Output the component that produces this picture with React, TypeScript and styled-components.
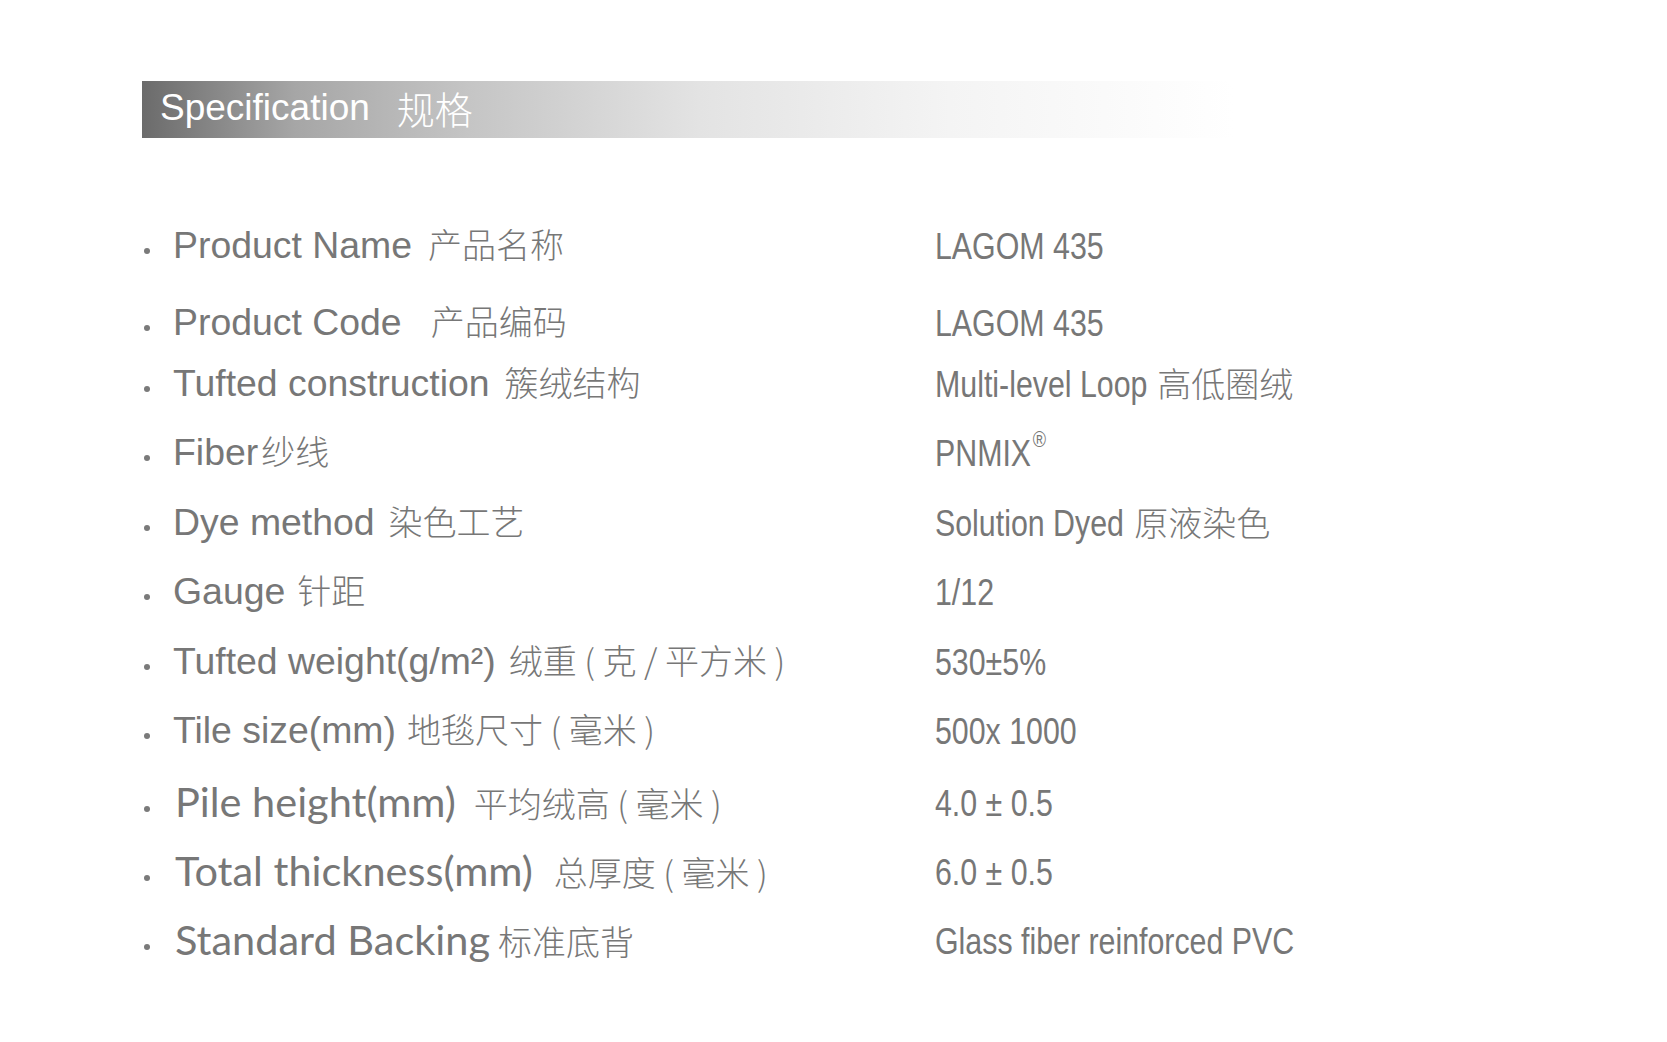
import React from 'react';
import styled, { createGlobalStyle } from 'styled-components';

// no Arial Narrow in the sandbox: the value column squeezes Liberation Sans instead
const NARROW = 0.82;

const GlobalStyle = createGlobalStyle`
  html,
  body {
    margin: 0;
    padding: 0;
    background: #fff;
  }

  body {
    font-family: 'Liberation Sans', Arial, sans-serif;
  }
`;

const Page = styled.div`
  width: 1667px;
  height: 1042px;
  box-sizing: border-box;
  padding: 81px 0 0 142px;
  color: #777;
`;

const Banner = styled.div`
  display: flex;
  align-items: center;
  width: 1091px;
  height: 57px;
  box-sizing: border-box;
  padding: 0 0 4px 18px;
  background: linear-gradient(
    to right,
    #6b6b6b 0%,
    #a6a6a6 14%,
    #c5c5c5 30%,
    #e3e3e3 51%,
    #f4f4f4 74%,
    #fff 100%
  );
  color: #fff;
  font-size: 37px;
  line-height: 1;
`;

const BannerZh = styled.span`
  margin-left: 27px;
  font-family: 'Noto Sans CJK SC', sans-serif;
  font-size: 38px;
  font-weight: 300;
`;

const List = styled.ul`
  list-style: none;
  margin: 88px 0 0;
  padding: 0;
`;

const Row = styled.li<{ $mt: number }>`
  display: grid;
  grid-template-columns: 31px 762px auto;
  align-items: center;
  height: 40px;
  margin-top: ${(p) => p.$mt}px;
  line-height: 1;
  white-space: nowrap;
`;

const Dot = styled.span`
  width: 6px;
  height: 6px;
  margin: 10px 0 0 2px;
  border-radius: 50%;
  background: #7a7a7a;
`;

const Label = styled.span<{ $humanist?: boolean }>`
  padding-left: ${(p) => (p.$humanist ? 2 : 0)}px;
  margin-bottom: ${(p) => (p.$humanist ? 4 : 0)}px;
  font-family: ${(p) =>
    p.$humanist
      ? "Lato, 'Liberation Sans', sans-serif"
      : "'Liberation Sans', Arial, sans-serif"};
  font-size: ${(p) => (p.$humanist ? 41.5 : 37.4)}px;
`;

const Zh = styled.span<{ $gap: number }>`
  margin-left: ${(p) => p.$gap}px;
  font-family: 'Noto Sans CJK SC', sans-serif;
  font-size: 34px;
  font-weight: 300;
`;

const Value = styled.span`
  font-family: 'Liberation Sans Narrow', 'Liberation Sans', sans-serif;
  font-size: 37px;
  transform: scaleX(${NARROW});
  transform-origin: left center;
`;

// undo the squeeze for the Chinese part of a value
const ValueZh = styled(Zh)`
  display: inline-block;
  transform: scaleX(${1 / NARROW});
  transform-origin: left center;
`;

const Sup = styled.span`
  position: relative;
  top: -19px;
  margin-left: 2px;
  font-size: 22px;
`;

interface ISpec {
  en: string;
  zh: string;
  gap: number;
  value: React.ReactNode;
  valueZh?: string;
  humanist?: boolean;
  mt: number;
}

const specs: ISpec[] = [
  { en: 'Product Name', zh: '产品名称', gap: 16, value: 'LAGOM 435', mt: 0 },
  { en: 'Product Code', zh: '产品编码', gap: 29, value: 'LAGOM 435', mt: 37 },
  {
    en: 'Tufted construction',
    zh: '簇绒结构',
    gap: 15,
    value: 'Multi-level Loop',
    valueZh: '高低圈绒',
    mt: 21
  },
  {
    en: 'Fiber',
    zh: '纱线',
    gap: 3,
    value: (
      <>
        PNMIX<Sup>®</Sup>
      </>
    ),
    mt: 29
  },
  {
    en: 'Dye method',
    zh: '染色工艺',
    gap: 14,
    value: 'Solution Dyed',
    valueZh: '原液染色',
    mt: 30
  },
  { en: 'Gauge', zh: '针距', gap: 12, value: '1/12', mt: 29 },
  {
    en: 'Tufted weight(g/m²)',
    zh: '绒重 ( 克 / 平方米 )',
    gap: 13,
    value: '530±5%',
    mt: 30
  },
  {
    en: 'Tile size(mm)',
    zh: '地毯尺寸 ( 毫米 )',
    gap: 11,
    value: '500x 1000',
    mt: 29
  },
  {
    en: 'Pile height(mm)',
    zh: '平均绒高 ( 毫米 )',
    gap: 18,
    value: '4.0 ± 0.5',
    humanist: true,
    mt: 30
  },
  {
    en: 'Total thickness(mm)',
    zh: '总厚度 ( 毫米 )',
    gap: 21,
    value: '6.0 ± 0.5',
    humanist: true,
    mt: 29
  },
  {
    en: 'Standard Backing',
    zh: '标准底背',
    gap: 8,
    value: 'Glass fiber reinforced PVC',
    humanist: true,
    mt: 29
  }
];

const App = () => {
  return (
    <Page>
      <GlobalStyle />
      <Banner>
        Specification
        <BannerZh>规格</BannerZh>
      </Banner>
      <List>
        {specs.map((spec, index: number) => (
          <Row key={index} $mt={spec.mt}>
            <Dot />
            <Label $humanist={spec.humanist}>
              {spec.en}
              <Zh $gap={spec.gap}>{spec.zh}</Zh>
            </Label>
            <Value>
              {spec.value}
              {spec.valueZh && (
                <ValueZh $gap={10 / NARROW}>{spec.valueZh}</ValueZh>
              )}
            </Value>
          </Row>
        ))}
      </List>
    </Page>
  );
};

export default App;
